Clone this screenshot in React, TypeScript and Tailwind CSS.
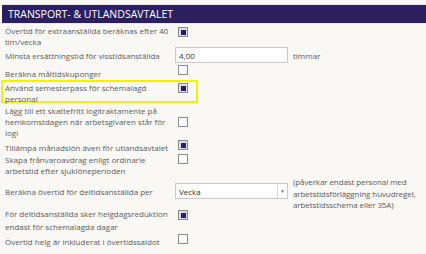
import React from 'react';

function Check({ checked }: { checked?: boolean }) {
  return (
    <div className="flex h-[10px] w-[10px] items-center justify-center border border-[#8a8a8a] bg-white">
      {checked && (
        <div className="flex h-[8px] w-[8px] items-center justify-center bg-[#dcd9ea]">
          <div className="h-[5px] w-[5px] bg-[#2b1f5f]" />
        </div>
      )}
    </div>
  );
}

export default function App() {
  return (
    <div className="h-[254px] w-[426px] overflow-hidden bg-[#f9f8f5] pt-[4px] text-[8px] leading-[11px] text-[#5b5b5b] [font-family:'Open_Sans',sans-serif]">
      <div className="ml-[2px] flex h-[20px] items-center border-y border-[#e8e6f0] bg-[#2b1f5f] pl-[6px] text-[10.5px] text-white">
        TRANSPORT- &amp; UTLANDSAVTALET
      </div>

      <div className="pl-[5px]">
        {/* Övertid extra */}
        <div className="flex h-[22px] items-start pt-[1px]">
          <div className="w-[173px]">Övertid för extraanställda beräknas efter 40 tim/vecka</div>
          <div className="pt-[2px]"><Check checked /></div>
        </div>

        {/* Minsta ersättningstid */}
        <div className="flex h-[18px] items-center">
          <div className="w-[170px]">Minsta ersättningstid för visstidsanställda</div>
          <div className="flex h-[16px] w-[113px] items-center border border-[#c9c9cc] bg-white pl-[3px] text-[#333]">4,00</div>
          <div className="pl-[5px]">timmar</div>
        </div>

        {/* Måltidskuponger */}
        <div className="flex h-[16px] items-start pt-[3px]">
          <div className="w-[173px] pt-[1px]">Beräkna måltidskuponger</div>
          <div className="-mt-[2px]"><Check /></div>
        </div>

        {/* Highlighted */}
        <div className="-ml-[4px] flex h-[23px] w-[197px] items-start border-2 border-[#f2f200] pl-[2px]">
          <div className="w-[173px]">Använd semesterpass för schemalagd personal</div>
          <div className="pt-[1px]"><Check checked /></div>
        </div>

        {/* Logitraktamente */}
        <div className="flex h-[35px] items-center pt-[2px]">
          <div className="w-[173px]">Lägg till ett skattefritt logitraktamente på hemkomstdagen när arbetsgivaren står för logi</div>
          <Check />
        </div>

        {/* Månadslön */}
        <div className="flex h-[13px] items-start">
          <div className="w-[173px] pt-[4px]">Tillämpa månadslön även för utlandsavtalet</div>
          <div className="pt-[2px]"><Check checked /></div>
        </div>

        {/* Frånvaroavdrag */}
        <div className="flex h-[25px] items-start pt-[3px]">
          <div className="w-[173px]">Skapa frånvaroavdrag enligt ordinarie arbetstid efter sjuklöneperioden</div>
          <Check />
        </div>

        {/* Deltid per */}
        <div className="mt-[7px] flex h-[24px] items-start">
          <div className="w-[170px] pt-[3px]">Beräkna övertid för deltidsanställda per</div>
          <div className="flex h-[16px] w-[113px] items-stretch border border-[#c9c9cc] bg-white text-[#333]">
            <div className="flex flex-1 items-center pl-[3px]">Vecka</div>
            <div className="flex w-[10px] items-center justify-center border-l border-[#d6d6d6] text-[5px] text-[#777]">▼</div>
          </div>
          <div className="-mt-[7px] whitespace-nowrap pl-[5px] leading-[11.5px] tracking-[-0.1px]">
            <div>(påverkar endast personal med</div>
            <div>arbetstidsförläggning huvudregel,</div>
            <div>arbetstidsschema eller 35A)</div>
          </div>
        </div>

        {/* Helgdagsreduktion */}
        <div className="flex h-[25px] items-start pt-[1px]">
          <div className="w-[173px] leading-[12.5px]">För deltidsanställda sker helgdagsreduktion endast för schemalagda dagar</div>
          <div className="pt-[2px]"><Check checked /></div>
        </div>

        {/* Övertid helg */}
        <div className="flex h-[16px] items-start pt-[2px]">
          <div className="w-[173px] pt-[2px]">Övertid helg är inkluderat i övertidssaldot</div>
          <Check />
        </div>
      </div>
    </div>
  );
}
